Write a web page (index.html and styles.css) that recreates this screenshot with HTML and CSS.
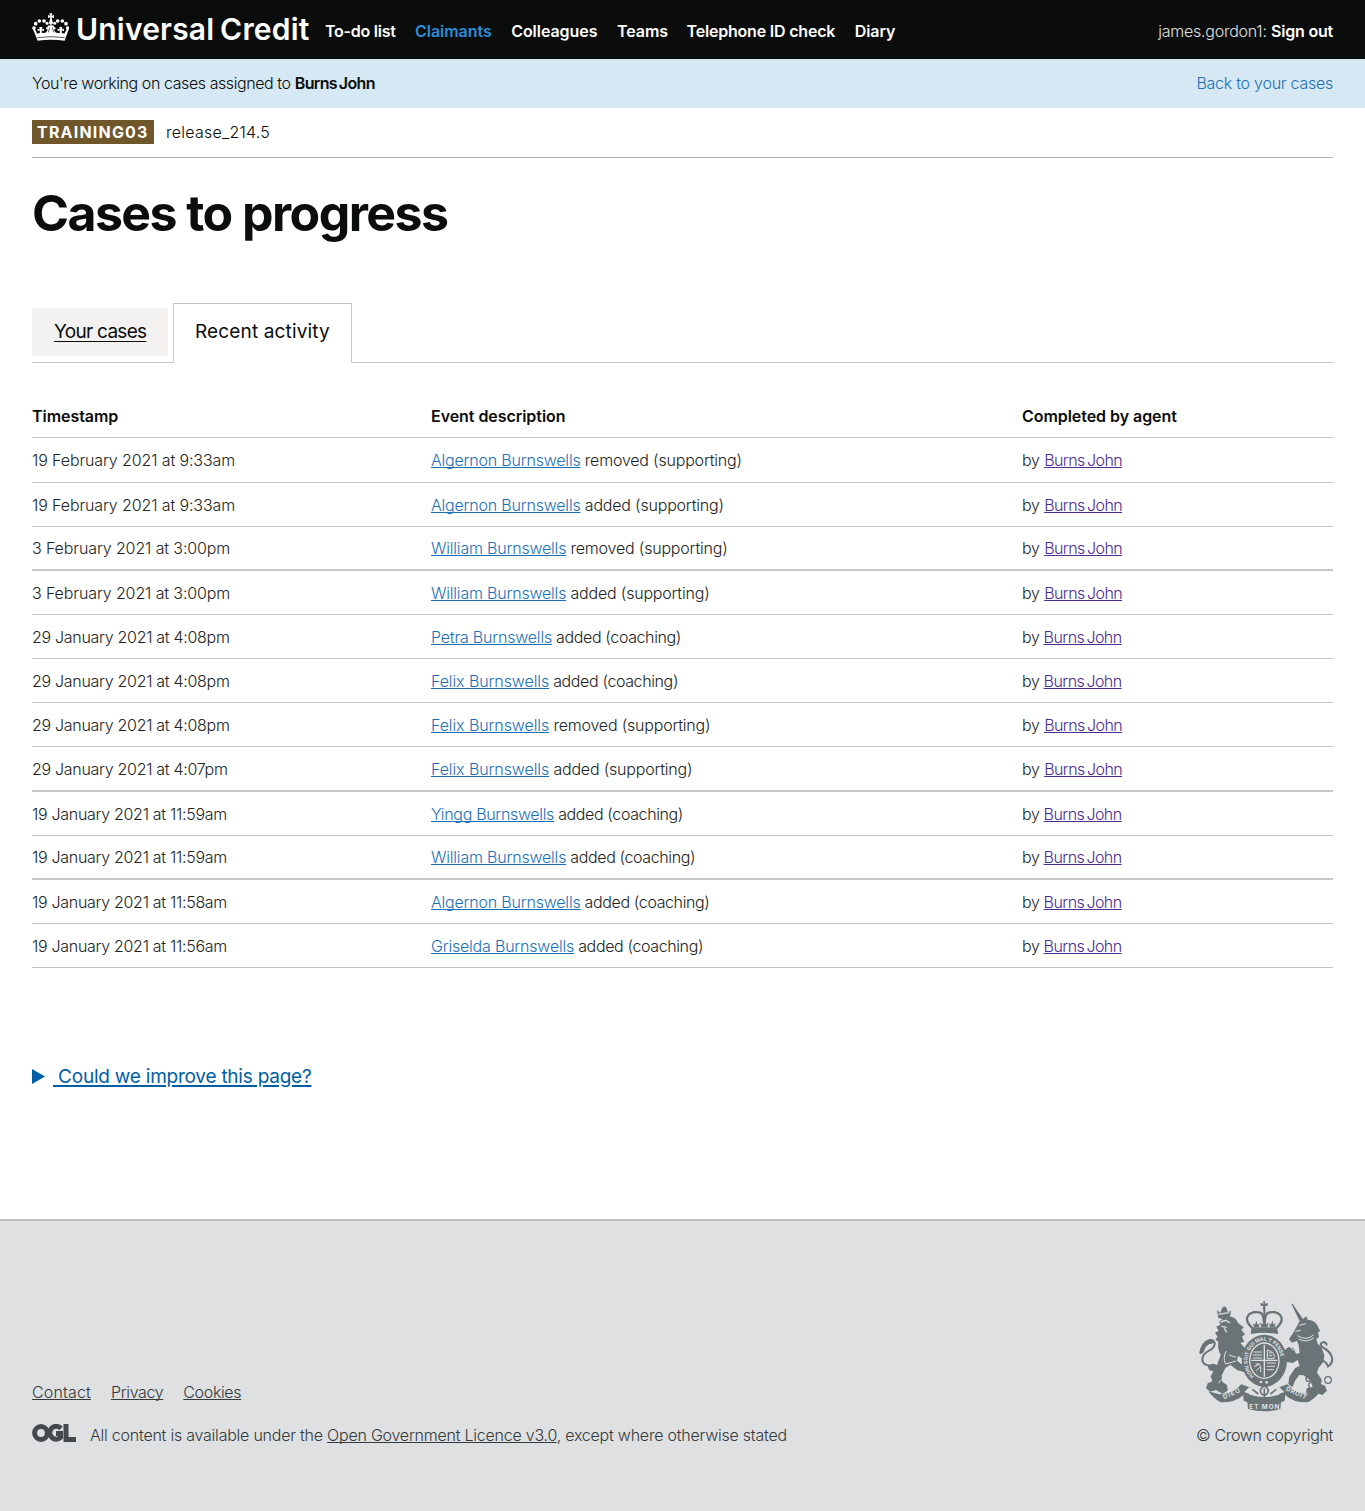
FILE: index.html
```html
<!DOCTYPE html>
<html lang="en">
<head>
<meta charset="utf-8">
<title>Cases to progress</title>
<link rel="stylesheet" href="styles.css">
</head>
<body>
<header class="header">
  <svg class="header-crown" viewBox="36 12 111 84" aria-hidden="true">
    <g fill="#fff">
      <path d="M88 13h9l-2 7 7-2v9l-7-2 2 11q4 3 1 8l-5 4-5-4q-3-5 1-8l2-11-7 2v-9l7 2z"/>
      <circle cx="42" cy="57" r="5.5"/><circle cx="47" cy="44" r="5.5"/><circle cx="58" cy="36" r="5.5"/><circle cx="72" cy="36" r="5.5"/><circle cx="81" cy="43" r="4.5"/>
      <circle cx="143" cy="57" r="5.5"/><circle cx="138" cy="44" r="5.5"/><circle cx="127" cy="36" r="5.5"/><circle cx="113" cy="36" r="5.5"/><circle cx="104" cy="43" r="4.5"/>
      <path d="M39 61l5-2 8 15 8-3-1-7-6 3v-8l6 2-1-7h9l-1 7 6-2v8l-6-3-1 7q13 3 16-4 4-8-3-7-2-6 5-5-2-5 6-6h7q8 1 6 6 7-1 5 5-7-1-3 7 3 7 16 4l-1-7-6 3v-8l6 2-1-7h9l-1 7 6-2v8l-6-3-1 7 8 3 8-15 5 2-12 34q-42-6-81 0z"/>
    </g>
    <path d="M52 86q41-6 82 0" fill="none" stroke="#0b0c0c" stroke-width="2"/>
    <path d="M89 56l-4 14M97 56l4 14" stroke="#0b0c0c" stroke-width="2"/>
  </svg>
  <a class="header-title">Universal Credit</a>
  <nav class="nav">
    <a class="nav-todo">To-do list</a>
    <a class="nav-current">Claimants</a>
    <a>Colleagues</a>
    <a>Teams</a>
    <a class="nav-phone">Telephone ID check</a>
    <a>Diary</a>
  </nav>
  <div class="user"><span class="user-name">james.gordon1:</span> <a class="sign-out">Sign out</a></div>
</header>
<div class="banner">
  <p class="banner-text">You're working on cases assigned to <b class="banner-name">Burns John</b></p>
  <a class="banner-back">Back to your cases</a>
</div>
<main class="main">
  <div class="phase"><strong class="phase-tag">TRAINING03</strong><span class="phase-text">release_214.5</span></div>
  <h1 class="title">Cases to progress</h1>
  <div class="tabs">
    <a class="tab">Your cases</a>
    <a class="tab tab-selected">Recent activity</a>
  </div>
  <div class="table">
    <div class="row row-head"><span>Timestamp</span><span>Event description</span><span>Completed by agent</span></div>
    <div class="row"><span class="feb">19 February 2021 at 9:33am</span><span><a class="link">Algernon Burnswells</a> removed (supporting)</span><span>by <a class="agent">Burns John</a></span></div>
    <div class="row"><span class="feb">19 February 2021 at 9:33am</span><span><a class="link">Algernon Burnswells</a> added (supporting)</span><span>by <a class="agent">Burns John</a></span></div>
    <div class="row row-strong"><span class="feb">3 February 2021 at 3:00pm</span><span><a class="link">William Burnswells</a> removed (supporting)</span><span>by <a class="agent">Burns John</a></span></div>
    <div class="row"><span class="feb">3 February 2021 at 3:00pm</span><span><a class="link">William Burnswells</a> added (supporting)</span><span>by <a class="agent">Burns John</a></span></div>
    <div class="row row-coaching"><span class="jan">29 January 2021 at 4:08pm</span><span><a class="link">Petra Burnswells</a> added (coaching)</span><span>by <a class="agent">Burns John</a></span></div>
    <div class="row row-coaching"><span class="jan">29 January 2021 at 4:08pm</span><span><a class="link link-felix">Felix Burnswells</a> added (coaching)</span><span>by <a class="agent">Burns John</a></span></div>
    <div class="row"><span class="jan">29 January 2021 at 4:08pm</span><span><a class="link link-felix">Felix Burnswells</a> removed (supporting)</span><span>by <a class="agent">Burns John</a></span></div>
    <div class="row row-strong"><span class="jan">29 January 2021 at 4:07pm</span><span><a class="link link-felix">Felix Burnswells</a> added (supporting)</span><span>by <a class="agent">Burns John</a></span></div>
    <div class="row row-coaching"><span class="jan">19 January 2021 at 11:59am</span><span><a class="link link-tight">Yingg Burnswells</a> added (coaching)</span><span>by <a class="agent">Burns John</a></span></div>
    <div class="row row-coaching row-strong"><span class="jan">19 January 2021 at 11:59am</span><span><a class="link">William Burnswells</a> added (coaching)</span><span>by <a class="agent">Burns John</a></span></div>
    <div class="row row-coaching"><span class="jan">19 January 2021 at 11:58am</span><span><a class="link">Algernon Burnswells</a> added (coaching)</span><span>by <a class="agent">Burns John</a></span></div>
    <div class="row row-coaching"><span class="jan">19 January 2021 at 11:56am</span><span><a class="link">Griselda Burnswells</a> added (coaching)</span><span>by <a class="agent">Burns John</a></span></div>
  </div>
  <div class="improve">
    <svg class="improve-arrow" viewBox="0 0 13 15" aria-hidden="true"><path d="M0 0l13 7.500L0 15z" fill="#005ea5"/></svg>
    <a class="improve-link">&nbsp;Could we improve this page?</a>
  </div>
</main>
<footer class="footer">
  <div class="footer-left">
    <div class="footer-links"><a class="footer-contact">Contact</a><a>Privacy</a><a>Cookies</a></div>
    <div class="licence">
      <svg class="ogl" viewBox="0 0 44 18" aria-label="OGL"><g fill="none" stroke="#454a4d" stroke-width="5"><circle cx="9" cy="9" r="6.4"/><path d="M29 4.500A6.400 6.400 0 1 0 28.500 13.500V9.500H24"/><path d="M34 0v15.500h10"/></g></svg>
      <p class="licence-text">All content is available under the <a class="licence-link">Open Government Licence v3.0</a>, except where otherwise stated</p>
    </div>
  </div>
  <div class="copyright">
    <svg class="crest" viewBox="42 33 402 330" aria-hidden="true">
      <defs><path id="garter" d="M207 259A50 60 0 1 1 269 259"/></defs>
      <g fill="#6a7477">
        <!-- crown -->
        <path d="M234 34h7l-2 7 9-2v9l-8-1 2 12h-9l2-12-8 1v-9l9 2z"/>
        <path d="M197 132l3-20h76l4 20q-42-7-83 0z"/>
        <path d="M207 112l-3-12 6 4 4-12 4 12 6-4-3 12zM229 112l-4-14 8 5 5-16 5 16 8-5-4 14zM255 112l-3-12 6 4 4-12 4 12 6-4-3 12z"/>
        <!-- lion -->
        <path d="M96 60l10 9 5-15 7-5 7 5 4 14 9-7-3 19-35 5z"/>
        <path d="M104 84q12-10 35-4 14 3 20 19l17 13-7 8 11 13-9 7 7 15-12 4 10 11 10 10-7 10-9-2 16 15-6 9-21-15-3 15 20 15 14-2 7 13-14 10-27-8-20-16-15 10-11 23 2 18 14 10 2 17-16 9-19-11-17 5-13-10 5-15 14-6-5-15 8-15-12-3-5-12 14-8 14 4 11-31q-10-15-7-38l-9-8 7-8-8-12 11-6-7-12 12-6-3-11 10-4z"/>
        <!-- unicorn -->
        <path d="M344 94L319 41l4 1 31 45 10-8 4 10q20 1 28 15l9 18-6 6 3 13-8 5 4 15 11 9 9 26-3 20-14 17-5 15 13 19-3 14 14 6 6 15-14 13-18-6-15 8-16-9 2-13 18-3-6-20-21-16-13-1-12 16-9 21-12-10 3-22 17-25 14-8-6-17-15 9-19-3-4 13-15-13-4-21-8-11 13-7 12 7 4-6 10-8 14 5 7 16 11-2-3-24-5-12-15 5-9-10 14-22z"/>
      </g>
      <g fill="none" stroke="#6a7477" stroke-linecap="round">
        <path d="M202 114q-24-22-12-38 14-15 38-7 7 4 9 28M274 114q24-22 12-38-14-15-38-7-7 4-9 28" stroke-width="7" stroke-dasharray="7 2"/>
        <path d="M238 60v35" stroke-width="6"/>
        <path d="M88 225q-37 6-36-19 2-14 20-24 18-9 17-23-4-12-18-8-20 7-25 38M402 205q24 11 27 24 18-11 10-32-7-15-23-23-15-11-4-17 10-3 13 7" stroke-width="6"/>
        <path d="M50 184q8-28 30-29" stroke-width="12"/>
      </g>
      <g fill="none" stroke="#dee0e2">
        <path d="M107 96l16-5 12 8M109 109l16 3M118 115l7 12M100 73l32-5" stroke-width="4"/>
        <path d="M124 183q-12 20-2 39l31-9M100 280l18-21M138 245l21 21M133 195l20 7" stroke-width="3"/>
        <path d="M337 137q28 17 48-2M341 147q23 13 45-3" stroke-width="3"/>
        <path d="M343 106l19-5M331 124l16-3M313 170l15 12" stroke-width="3"/>
      </g>
      <g fill="none" stroke="#6a7477" stroke-width="4"><circle cx="371" cy="266" r="8"/><circle cx="380" cy="286" r="9"/><circle cx="399" cy="274" r="9"/><circle cx="429" cy="270" r="10"/><circle cx="392" cy="202" r="7"/></g>
      <!-- garter and shield -->
      <ellipse cx="238" cy="212" rx="68" ry="78" fill="#6a7477"/>
      <ellipse cx="238" cy="212" rx="46" ry="55" fill="#dee0e2"/>
      <ellipse cx="238" cy="212" rx="42" ry="51" fill="#6a7477"/>
      <g fill="none" stroke="#dee0e2" stroke-width="3">
        <path d="M238 164v96M199 211h78" stroke-width="4"/>
        <path d="M206 186h25M203 195h28M204 204h27M245 219h28M245 229h25M245 239h21M247 180q28 9 19 26h-19zM212 222q18-6 15 25M251 189h11M251 197h11M207 230l17-8M214 242l10-10"/>
      </g>
      <text class="crest-garter"><textPath href="#garter">HONI SOIT QUI MAL Y PENSE</textPath></text>
      <g fill="#dee0e2"><circle cx="228" cy="276" r="4"/><circle cx="245" cy="277" r="4"/></g>
      <!-- scroll -->
      <g fill="#6a7477">
        <path d="M70 304l33 9q43-1 66-30l31 11-8 21-16-1q-24 24-69 23-19-9-37-33z"/>
        <path d="M406 304l-33 9q-43-1-66-30l-31 11 8 21 16-1q24 24 69 23 19-9 37-33z"/>
        <path d="M174 307q64 28 128 0l-3 25-11 5-2 20q-49 14-97 0l-2-20-11-5z"/>
      </g>
      <path d="M178 306q60 27 120 0l-15-14q-48 16-91 0z" fill="#dee0e2"/>
      <path d="M238 337v-42m-12 5q12-24 24 0-3 17-12 15-11 0-12-15m-24-2l18 14m54-14l-18 14" fill="none" stroke="#6a7477" stroke-width="5"/>
      <text class="crest-motto" x="117" y="328" textLength="54" transform="rotate(-24 117 328)">DIEU</text>
      <text class="crest-motto" x="301" y="301" textLength="66" transform="rotate(25 301 301)">DROIT</text>
      <text class="crest-motto" x="193" y="356" textLength="90">ET MON</text>
    </svg>
    <span class="copyright-text">© Crown copyright</span>
  </div>
</footer>
</body>
</html>
```
FILE: styles.css
```css
* { box-sizing: border-box; }
body {
  margin: 0;
  background: #fff;
  color: #0b0c0c;
  font: 300 16px/20px Inter, "Liberation Sans", sans-serif;
  letter-spacing: -0.2px;
}
p, h1 { margin: 0; }
a, span, b { white-space: nowrap; }

.header {
  display: flex;
  align-items: center;
  height: 59px;
  padding: 3px 32px 0;
  background: #0b0c0c;
  color: #fff;
}
.header-crown { width: 37px; height: 28px; margin: -8px 7px 0 0; }
.header-title {
  width: 249px;
  margin-top: -5px;
  font-size: 30px;
  line-height: 36px;
  font-weight: 600;
  letter-spacing: 0.2px;
  word-spacing: -2px;
}
.nav { display: flex; gap: 19.5px; font-weight: 600; letter-spacing: -0.05px; }
.nav-todo { letter-spacing: -0.25px; }
.nav-phone { margin-left: -1px; letter-spacing: -0.2px; }
.nav-current { color: #2b8cdb; }
.user { margin-left: auto; color: #e0e0e0; }
.user-name { letter-spacing: -0.25px; }
.sign-out { color: #fff; font-weight: 600; letter-spacing: -0.2px; }

.banner {
  display: flex;
  align-items: center;
  justify-content: space-between;
  height: 49px;
  padding: 0 32px 2px;
  background: #d5e8f3;
}
.banner-text { letter-spacing: -0.42px; }
.banner-name { font-weight: 600; letter-spacing: -0.65px; word-spacing: -1.5px; }
.banner-back { color: #1d70b8; letter-spacing: -0.25px; }

.main { height: 1111px; padding: 0 32px; }
.phase {
  display: flex;
  align-items: center;
  gap: 12px;
  height: 50px;
  padding-bottom: 1px;
  border-bottom: 1px solid #b1b4b6;
}
.phase-tag {
  width: 122px;
  height: 24px;
  padding-left: 5px;
  background: #70572b;
  color: #fff;
  font-weight: 700;
  line-height: 24px;
  letter-spacing: 1.2px;
}
.phase-text { letter-spacing: 0.25px; }
.title {
  margin-top: 25px;
  font-size: 50px;
  line-height: 60px;
  font-weight: 700;
  letter-spacing: -1.55px;
  word-spacing: 0;
}
.tabs {
  display: flex;
  align-items: flex-end;
  gap: 5px;
  height: 61px;
  margin-top: 59px;
  border-bottom: 1px solid #c5c8ca;
  font-size: 19px;
  font-weight: 400;
}
.tab {
  width: 136px;
  height: 48px;
  margin-bottom: 6px;
  padding-left: 22px;
  background: #f3f2f1;
  line-height: 47px;
  letter-spacing: -0.7px;
  text-decoration: underline;
  text-underline-offset: 3px;
  text-decoration-thickness: 1px;
}
.tab-selected {
  width: 179px;
  height: 60px;
  margin-bottom: -1px;
  padding-left: 21px;
  border: 1px solid #c5c8ca;
  border-bottom: 0;
  background: #fff;
  line-height: 55px;
  letter-spacing: 0.15px;
  text-decoration: none;
}

.table { margin-top: 31.2px; }
.row {
  display: grid;
  grid-template-columns: 399px 591px 1fr;
  align-items: center;
  height: 44.17px;
  padding-top: 1px;
  border-bottom: 1px solid #c5c8ca;
  color: #222424;
  letter-spacing: -0.2px;
}
.row-head { color: #0b0c0c; font-weight: 600; letter-spacing: -0.05px; }
.row-coaching { letter-spacing: -0.38px; }
.row-strong { border-bottom-width: 2px; }
.feb { letter-spacing: -0.12px; }
.jan { letter-spacing: -0.3px; }
.link, .agent, .footer-links a, .licence-link {
  text-decoration: underline;
  text-decoration-thickness: 1px;
  text-underline-offset: 1px;
  text-decoration-skip-ink: none;
}
.link { color: #1d70b8; letter-spacing: -0.2px; }
.link-felix { letter-spacing: -0.1px; }
.link-tight { letter-spacing: -0.33px; }
.agent { color: #4c2c92; letter-spacing: -0.55px; word-spacing: -1.8px; }

.improve { display: flex; align-items: center; height: 24px; margin-top: 96.8px; }
.improve-arrow { width: 13px; height: 15px; margin: -2px 8px 0 0; }
.improve-link {
  color: #005ea5;
  font-size: 19px;
  line-height: 24px;
  font-weight: 400;
  letter-spacing: -0.23px;
  text-decoration: underline;
  text-decoration-thickness: 2px;
  text-underline-offset: 2px;
}

.footer {
  display: flex;
  justify-content: space-between;
  align-items: flex-end;
  height: 292px;
  padding: 0 32px 66px;
  border-top: 2px solid #b9bdc0;
  background: #dee0e2;
  color: #34393c;
}
.footer-links { display: flex; gap: 20px; letter-spacing: -0.35px; }
.footer-contact { letter-spacing: 0.15px; }
.licence { display: flex; align-items: center; margin-top: 23px; }
.ogl { width: 44px; height: 18px; margin: -4px 14px 0 0; }
.licence-text { letter-spacing: -0.23px; }
.copyright { display: flex; flex-direction: column; align-items: flex-end; }
.crest { width: 134px; height: 110px; margin-bottom: 14px; overflow: visible; }
.copyright-text { letter-spacing: -0.33px; }
.crest-garter { fill: #dee0e2; font: 700 15px Inter, sans-serif; letter-spacing: 0; }
.crest-motto { fill: #dee0e2; font: 700 19px Inter, sans-serif; letter-spacing: 0; }
```
